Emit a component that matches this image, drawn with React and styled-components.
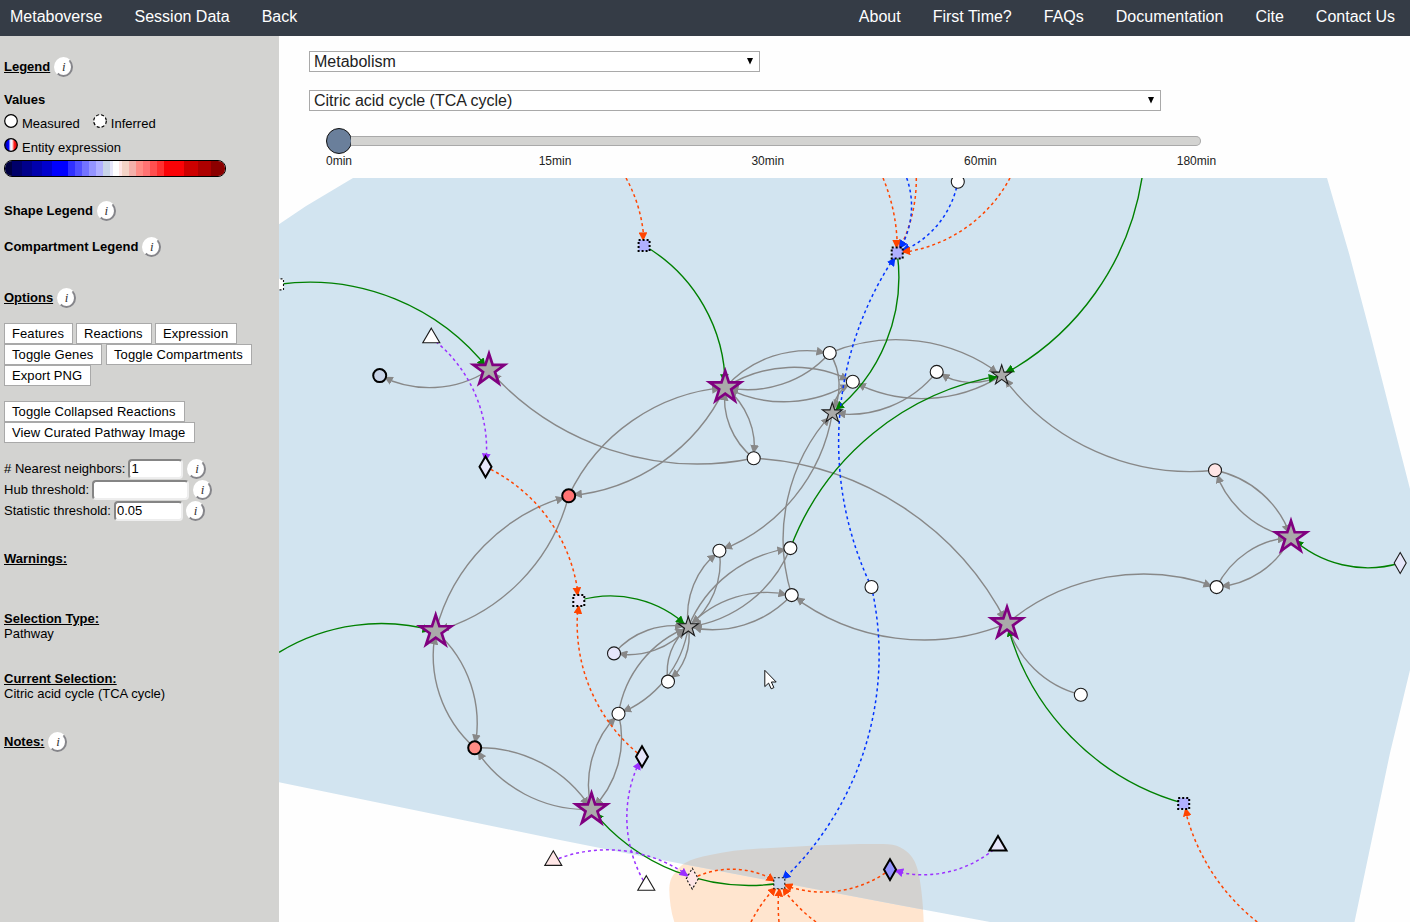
import React from "react";
import styled, { createGlobalStyle } from "styled-components";

const GlobalStyle = createGlobalStyle`
  *, *::before, *::after { box-sizing: border-box; }
  body {
    margin: 0;
    background: #fefefe;
    font-family: "Liberation Sans", Arial, sans-serif;
    color: #000;
    overflow: hidden;
  }
`;

const Page = styled.div`
  display: flex;
  flex-direction: column;
  width: 1410px;
  height: 922px;
  overflow: hidden;
`;

const TopBar = styled.header`
  display: flex;
  justify-content: space-between;
  flex: none;
  height: 36px;
  padding: 0 15px 0 10px;
  background: #353c46;
`;

const NavGroup = styled.nav`
  display: flex;
  gap: 32px;
`;

const NavLink = styled.a`
  color: #fff;
  font-size: 16px;
  line-height: 33px;
  white-space: nowrap;
`;

const Body = styled.div`
  display: flex;
  flex: 1;
  min-height: 0;
`;

const Sidebar = styled.aside`
  flex: none;
  width: 279px;
  padding: 20px 4px 0;
  background: #d3d3d1;
  font-size: 13px;
  line-height: 15px;
`;

const Row = styled.div`
  display: flex;
  align-items: center;
  height: ${(p) => p.$h || 21}px;
  margin-top: ${(p) => p.$mt || 0}px;
  gap: ${(p) => p.$gap || 0}px;
  white-space: nowrap;
`;

const Heading = styled.b`
  text-decoration: ${(p) => (p.$plain ? "none" : "underline")};
`;

const FieldLabel = styled.label`
  letter-spacing: 0.04px;
`;

const InfoDot = styled.span`
  display: inline-block;
  flex: none;
  width: 19px;
  height: 20px;
  margin-left: ${(p) => p.$ml ?? 4}px;
  border: 2px solid;
  border-color: #fff #85858a #85858a #fff;
  border-radius: 50%;
  background: #fff;
  font: italic 13px/16px "Liberation Serif", "Times New Roman", serif;
  text-align: center;
  color: #333;
`;

const LegendIcon = styled.svg`
  flex: none;
  width: 14px;
  height: 14px;
  margin: -4px 4px 0 0;
`;

const LegendItem = styled.span`
  display: flex;
  align-items: center;
`;

const ScaleBar = styled.div`
  display: flex;
  width: 222px;
  height: 17px;
  margin-top: 1px;
  border: 1px solid #000;
  border-radius: 8px;
  overflow: hidden;
`;

const ScaleStep = styled.span`
  flex: ${(p) => p.$w} 0 0;
  background: ${(p) => p.$c};
`;

const Button = styled.button`
  width: ${(p) => p.$w}px;
  height: 21px;
  padding: 0 0 0 7px;
  border: 1px solid #a9a9a9;
  background: #fff;
  font: 13px/15px "Liberation Sans", Arial, sans-serif;
  letter-spacing: 0.09px;
  text-align: left;
  color: #000;
  white-space: nowrap;
`;

const Field = styled.input`
  width: ${(p) => p.$w}px;
  height: 20px;
  margin-left: ${(p) => p.$ml}px;
  padding: 0 1px;
  border: 2px solid;
  border-color: #858585 #eee #eee #858585;
  border-radius: 4px;
  background: #fff;
  font: 13px/15px "Liberation Sans", Arial, sans-serif;
  color: #000;
  outline: none;
`;

const Main = styled.main`
  display: flex;
  flex-direction: column;
  flex: 1;
  min-width: 0;
`;

const Controls = styled.section`
  flex: none;
  height: 142px;
  padding: 15px 0 0 30px;
`;

const SelectBox = styled.div`
  display: flex;
  align-items: center;
  justify-content: space-between;
  width: ${(p) => p.$w}px;
  height: 21px;
  margin-bottom: 18px;
  padding: 0 6px 0 4px;
  border: 1px solid #a9a9a9;
  background: #fff;
  font-size: 16px;
  line-height: 19px;
  color: #222;
`;

const Slider = styled.div`
  display: flex;
  align-items: center;
  width: 875px;
  height: 26px;
  margin-left: 17px;
  margin-top: -1px;
`;

const Thumb = styled.span`
  flex: none;
  width: 26px;
  height: 26px;
  border: 1.5px solid #111;
  border-radius: 50%;
  background: #6a7f9b;
`;

const Track = styled.span`
  flex: 1;
  height: 10px;
  margin-left: -1px;
  border: 1px solid #a9a9a9;
  border-left: 0;
  border-radius: 0 5px 5px 0;
  background: #d3d3d1;
`;

const Ticks = styled.div`
  display: grid;
  grid-template-columns: repeat(5, 212.7px);
  margin-left: 17px;
  font-size: 12px;
  line-height: 14px;
  color: #222;
`;

const Graph = styled.svg`
  display: block;
  flex: none;
  width: 1131px;
  height: 744px;
`;

const scale = [
  [7, "#00003f"], [10, "#00006a"], [10, "#00008b"], [10, "#0000ad"], [10, "#0000cd"],
  [16, "#0000ff"], [7, "#3030ff"], [7, "#5050ff"], [7, "#7373ff"], [7, "#9494ff"],
  [7, "#b0b0ff"], [7, "#c8d4e8"], [3, "#e6e6fa"], [7, "#ffffff"], [3, "#ffe6e6"],
  [7, "#f3d3c6"], [7, "#f4b0aa"], [7, "#ff8c85"], [7, "#ff7373"], [7, "#ff4f4f"],
  [7, "#ff3030"], [20, "#fa0307"], [14, "#cd0000"], [13, "#ad0000"], [14, "#8b0000"],
];

const LAV = "#e6e6fa";
const PINK = "#ffe6e6";

/* id: [shape, x, y, fill, border] */
const nodes = {
  A: ["star", 489, 370, "#aaa", "key"],
  B: ["star", 725.2, 387.4, "#aaa", "key"],
  G: ["star", 435.7, 631.3, "#aaa", "key"],
  H: ["star", 591.5, 809.4, "#aaa", "key"],
  L: ["star", 1291, 537.3, "#aaa", "key"],
  M: ["star", 1007, 623.4, "#aaa", "key"],
  E: ["star", 1001.7, 375.4, "#aaa", "thin"],
  F: ["star", 832.3, 413.1, "#aaa", "thin"],
  K: ["star", 688.3, 627, "#aaa", "thin"],
  C1: ["circle", 379.7, 375.6, "#c8d4e8", "bold"],
  c0: ["circle", 957.8, 181.7, "#fff", "thin"],
  c2: ["circle", 829.7, 353, "#fff", "thin"],
  c3: ["circle", 852.8, 381.7, "#fff", "thin"],
  c4: ["circle", 936.7, 371.9, "#fff", "thin"],
  c5: ["circle", 753.7, 458.2, "#fff", "thin"],
  c6: ["circle", 614, 653.4, LAV, "thin"],
  c7: ["circle", 618.5, 713.8, "#fff", "thin"],
  c8: ["circle", 719.4, 550.8, "#fff", "thin"],
  c9: ["circle", 790.4, 548.1, "#fff", "thin"],
  c10: ["circle", 791.7, 595.1, "#fff", "thin"],
  c11: ["circle", 668, 681.6, "#fff", "thin"],
  c12: ["circle", 1216.6, 587.1, "#fff", "thin"],
  c13: ["circle", 1080.8, 694.7, "#fff", "thin"],
  c14: ["circle", 871.5, 587, "#fff", "thin"],
  r1: ["circle", 568.7, 495.8, "#ff7373", "bold"],
  r2: ["circle", 474.7, 747.8, "#ff8c85", "bold"],
  r3: ["circle", 1215, 470.3, PINK, "thin"],
  S0: ["square", 278, 284.4, "#fff", "dash"],
  S1: ["square", 644.1, 245.5, "#b0b0ff", "dot"],
  S2: ["square", 897.2, 253.1, "#b0b0ff", "dot"],
  S3: ["square", 578.8, 600.5, LAV, "dot"],
  S4: ["square", 779.3, 883.2, "#c8d4e8", "dash"],
  S5: ["square", 1183.7, 803.4, "#b0b0ff", "dot"],
  T1: ["triangle", 431.3, 338, "#fff", "thin"],
  T2: ["triangle", 553.3, 860.6, PINK, "thin"],
  T3: ["triangle", 646.3, 885.5, "#fff", "thin"],
  T4: ["triangle", 998, 845.8, LAV, "bold"],
  D1: ["diamond", 485.5, 466.8, LAV, "bold"],
  D2: ["diamond", 642, 756.7, LAV, "bold"],
  D3: ["diamond", 692.3, 878.7, PINK, "dash"],
  D4: ["diamond", 890, 869.6, "#9494ff", "bold"],
  D5: ["diamond", 1400.2, 563, LAV, "thin"],
};

const grey = [
  "A C1", "c5 A", "c5 M", "r1 B", "B r1", "G r1", "r1 G", "G r2", "r2 G", "r2 H", "H r2",
  "H c7", "c7 H", "c7 K", "K c7", "K c11", "c11 K", "K c6", "c6 K", "K c8", "c8 K",
  "K c9", "c9 K", "K c10", "c10 K", "c10 F", "F c8", "M c10", "M c12", "c13 M",
  "c12 L", "L c12", "r3 L", "L r3", "r3 E", "E c4", "c4 F", "E c3", "c2 E",
  "B c2", "c2 B", "B c3", "c3 B", "c2 F", "F c3", "B c5", "c5 B",
];
const green = ["S0 A", "S1 B", "S2 F", "c9 E", "S4 H", "S3 K", "S5 M", "D5 L"];
const blue = ["c14 S2", "c14 S4", "c0 S2"];
const purple = ["T1 D1", "T2 D3", "T3 D2", "T4 D4"];
const orange = ["D1 S3", "D2 S3", "D3 S4", "D4 S4"];

/* links entering from beyond the viewport: x, y, target, radius, kind */
const entering = [
  [1142, 178, "E", 270.7, "green"],
  [279, 652.3, "G", 196.5, "green"],
  [906.7, 178, "S2", 84, "blue"],
  [626, 178, "S1", 144, "orange"],
  [883, 178, "S2", 183, "orange"],
  [916.3, 178, "S2", 152, "orange"],
  [1010, 178, "S2", 143.5, "orange"],
  [1257.3, 922, "S5", 204.5, "orange"],
  [751, 922, "S4", 150, "orange"],
  [779, 922, "S4", 200, "orange"],
  [816, 922, "S4", 150, "orange"],
];

const colors = {
  grey: "#888888",
  green: "#008000",
  blue: "#0033ff",
  purple: "#9b30ff",
  orange: "#ff4500",
};

const cytosol =
  "M669.3,890C669.5,882 671,877 675,873C679,867 682,865 685,863C692,859 700,857 710,855C725,851.5 742,849.5 760,848.5L820,845.3L860,844L883,844C890,844 896,845 900,847.3C905,849.5 909,853 911.7,856.7C915,861 917,866 919,875C921,886 923,900 923.7,922L674.3,922C671,912 669.5,900 669.3,890Z";
const matrix =
  "M353,178L305.7,206.3L279,224.3V782.3L560,840L629,853.8L900,905.3L990,922H1354.5L1390,753L1410,670V489L1390.5,413L1370.2,333.5L1349.2,254L1327,178Z";

function arc(x1, y1, x2, y2, r) {
  return `M${x1},${y1}A${r},${r} 0 0,1 ${x2},${y2}`;
}

function Link({ d, kind }) {
  const dashed = kind === "blue" || kind === "purple" || kind === "orange";
  return (
    <path
      d={d}
      fill="none"
      stroke={colors[kind]}
      strokeWidth={dashed ? 1.5 : 1.4}
      strokeDasharray={dashed ? "3 3" : undefined}
      markerEnd={`url(#arrow-${kind})`}
    />
  );
}

function Links({ list, kind }) {
  return list.map((pair) => {
    const [s, t] = pair.split(" ").map((id) => nodes[id]);
    const r = Math.hypot(t[1] - s[1], t[2] - s[2]);
    return <Link key={pair} kind={kind} d={arc(s[1], s[2], t[1], t[2], r)} />;
  });
}

function starPoints(r) {
  const pts = [];
  for (let i = 0; i < 10; i++) {
    const a = (Math.PI * i) / 5;
    const q = i % 2 ? r * 0.382 : r;
    pts.push(`${(Math.sin(a) * q).toFixed(2)},${(-Math.cos(a) * q).toFixed(2)}`);
  }
  return pts.join(" ");
}

const borders = {
  key: { stroke: "#800080", strokeWidth: 2.7 },
  thin: { stroke: "#1a1a1a", strokeWidth: 1.1 },
  bold: { stroke: "#000", strokeWidth: 2 },
  dash: { stroke: "#111", strokeWidth: 1.1, strokeDasharray: "2 2" },
  dot: { stroke: "#000", strokeWidth: 2, strokeDasharray: "2 2" },
};

function Node({ data }) {
  const [shape, x, y, fill, border] = data;
  const look = { fill, strokeMiterlimit: 10, ...borders[border] };
  if (shape === "circle") return <circle cx={x} cy={y} r="6.5" {...look} />;
  if (shape === "square") return <rect x={x - 5.5} y={y - 5.5} width="11" height="11" {...look} />;
  const points = {
    star: starPoints(border === "key" ? 16.4 : 10.5),
    triangle: "0,-9.8 8.5,4.8 -8.5,4.8",
    diamond: "0,-10.4 6,0 0,10.4 -6,0",
  }[shape];
  return <polygon points={points} transform={`translate(${x},${y})`} {...look} />;
}

function PathwayGraph() {
  return (
    <Graph viewBox="279 178 1131 744">
      <defs>
        {Object.entries(colors).map(([kind, c]) => (
          <marker
            key={kind}
            id={`arrow-${kind}`}
            viewBox="0 -5 10 10"
            refX="15"
            refY="-1"
            markerWidth="8.8"
            markerHeight="8.8"
            markerUnits="userSpaceOnUse"
            orient="auto"
          >
            <path d="M0,-5L10,0L0,5" fill={c} />
          </marker>
        ))}
        <clipPath id="matrix-area">
          <path d={matrix} />
        </clipPath>
      </defs>
      <path d={cytosol} fill="#ffe5cf" />
      <path d={matrix} fill="#d2e4f0" />
      <path d={cytosol} fill="#d3d2d0" clipPath="url(#matrix-area)" />
      <Links list={grey} kind="grey" />
      <Links list={green} kind="green" />
      <Links list={purple} kind="purple" />
      <Links list={orange} kind="orange" />
      <Links list={blue} kind="blue" />
      {[...entering].reverse().map(([x, y, t, r, kind], i) => (
        <Link key={i} kind={kind} d={arc(x, y, nodes[t][1], nodes[t][2], r)} />
      ))}
      {Object.entries(nodes).map(([id, data]) => (
        <Node key={id} data={data} />
      ))}
      <path
        d="M764.8,670.3V686.6L768.6,683.1L771.2,688.8L773.9,687.6L771.4,682H776.2Z"
        fill="#fff"
        stroke="#111"
        strokeWidth="1"
      />
    </Graph>
  );
}

function Info({ ml }) {
  return <InfoDot $ml={ml}>i</InfoDot>;
}

function Caret() {
  return (
    <svg width="6" height="7" viewBox="0 0 6 7">
      <path d="M0,0H6L3,6.4Z" fill="#000" />
    </svg>
  );
}

export default function App() {
  return (
    <Page>
      <GlobalStyle />
      <TopBar>
        <NavGroup>
          <NavLink>Metaboverse</NavLink>
          <NavLink>Session Data</NavLink>
          <NavLink>Back</NavLink>
        </NavGroup>
        <NavGroup>
          <NavLink>About</NavLink>
          <NavLink>First Time?</NavLink>
          <NavLink>FAQs</NavLink>
          <NavLink>Documentation</NavLink>
          <NavLink>Cite</NavLink>
          <NavLink>Contact Us</NavLink>
        </NavGroup>
      </TopBar>
      <Body>
        <Sidebar>
          <Row><Heading>Legend</Heading><Info /></Row>
          <Row $mt={14} $h={17}><Heading $plain>Values</Heading></Row>
          <Row $mt={3} $h={24} $gap={13}>
            <LegendItem>
              <LegendIcon viewBox="0 0 14 14">
                <circle cx="7" cy="7" r="6.3" fill="#fff" stroke="#000" strokeWidth="1.2" />
              </LegendIcon>
              Measured
            </LegendItem>
            <LegendItem>
              <LegendIcon viewBox="0 0 14 14">
                <circle cx="7" cy="7" r="6.3" fill="#fff" stroke="#000" strokeWidth="1.2" strokeDasharray="3 2" />
              </LegendIcon>
              Inferred
            </LegendItem>
          </Row>
          <Row $h={24}>
            <LegendIcon viewBox="0 0 14 14">
              <defs>
                <linearGradient id="expr">
                  <stop offset="0.05" stopColor="#0000aa" />
                  <stop offset="0.3" stopColor="#0000ff" />
                  <stop offset="0.45" stopColor="#e0e0ff" />
                  <stop offset="0.58" stopColor="#ffffff" />
                  <stop offset="0.75" stopColor="#ff2020" />
                  <stop offset="1" stopColor="#d00000" />
                </linearGradient>
              </defs>
              <circle cx="7" cy="7" r="6.3" fill="url(#expr)" stroke="#000" strokeWidth="1.2" />
            </LegendIcon>
            Entity expression
          </Row>
          <ScaleBar>
            {scale.map(([w, c], i) => <ScaleStep key={i} $w={w} $c={c} />)}
          </ScaleBar>
          <Row $mt={23}><Heading $plain>Shape Legend</Heading><Info /></Row>
          <Row $mt={15}><Heading $plain>Compartment Legend</Heading><Info /></Row>
          <Row $mt={30}><Heading>Options</Heading><Info /></Row>
          <Row $mt={15} $gap={3}>
            <Button $w={69}>Features</Button>
            <Button $w={76}>Reactions</Button>
            <Button $w={82}>Expression</Button>
          </Row>
          <Row $gap={4}>
            <Button $w={98}>Toggle Genes</Button>
            <Button $w={146}>Toggle Compartments</Button>
          </Row>
          <Row><Button $w={87}>Export PNG</Button></Row>
          <Row $mt={15}><Button $w={181}>Toggle Collapsed Reactions</Button></Row>
          <Row><Button $w={191}>View Curated Pathway Image</Button></Row>
          <Row $mt={15}><FieldLabel># Nearest neighbors:</FieldLabel><Field $w={55} $ml={3} defaultValue="1" /><Info /></Row>
          <Row><FieldLabel>Hub threshold:</FieldLabel><Field $w={97} $ml={3} defaultValue="" /><Info /></Row>
          <Row><FieldLabel>Statistic threshold:</FieldLabel><Field $w={69} $ml={3} defaultValue="0.05" /><Info ml={3} /></Row>
          <Row $mt={27}><Heading>Warnings:</Heading></Row>
          <Row $mt={42} $h={15}><Heading>Selection Type:</Heading></Row>
          <Row $h={15}>Pathway</Row>
          <Row $mt={30} $h={15}><Heading>Current Selection:</Heading></Row>
          <Row $h={15}>Citric acid cycle (TCA cycle)</Row>
          <Row $mt={30}><Heading>Notes:</Heading><Info /></Row>
        </Sidebar>
        <Main>
          <Controls>
            <SelectBox $w={451}>
              Metabolism
              <Caret />
            </SelectBox>
            <SelectBox $w={852}>
              Citric acid cycle (TCA cycle)
              <Caret />
            </SelectBox>
            <Slider><Thumb /><Track /></Slider>
            <Ticks>
              <span>0min</span>
              <span>15min</span>
              <span>30min</span>
              <span>60min</span>
              <span>180min</span>
            </Ticks>
          </Controls>
          <PathwayGraph />
        </Main>
      </Body>
    </Page>
  );
}
